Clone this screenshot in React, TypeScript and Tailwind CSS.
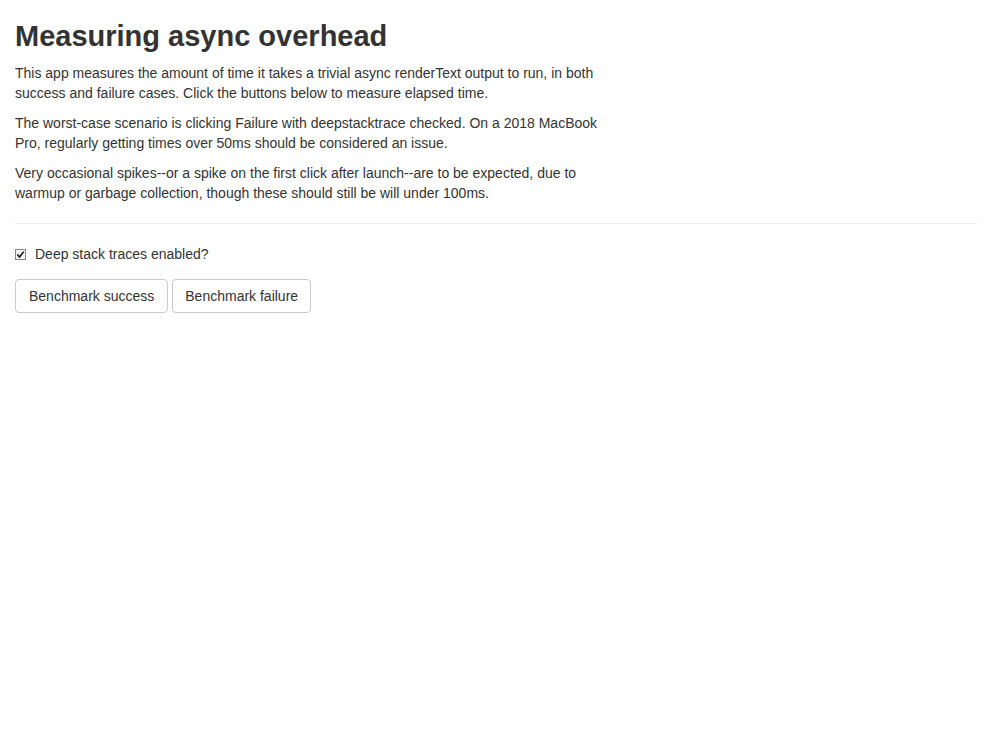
export default function App() {
  return (
    <div className="min-h-screen bg-white px-[15px] text-[14px] leading-[20px] text-[#333]" style={{ fontFamily: '"Liberation Sans", Arial, sans-serif' }}>
      <h2 className="mt-[20px] mb-[10px] text-[29px] font-bold leading-[33px]">Measuring async overhead</h2>
      <div className="max-w-[600px]">
        <p className="mb-[10px]">This app measures the amount of time it takes a trivial async renderText output to run, in both success and failure cases. Click the buttons below to measure elapsed time.</p>
        <p className="mb-[10px]">The worst-case scenario is clicking Failure with deepstacktrace checked. On a 2018 MacBook Pro, regularly getting times over 50ms should be considered an issue.</p>
        <p className="mb-[10px]">Very occasional spikes--or a spike on the first click after launch--are to be expected, due to warmup or garbage collection, though these should still be will under 100ms.</p>
      </div>
      <hr className="my-[20px] border-t border-[#eee]" />
      <div className="mb-[15px]">
        <label className="mt-[10px] mb-[10px] flex items-center gap-[9px]">
          <span className="flex h-[11px] w-[11px] items-center justify-center border border-[#8a8a8a] bg-[#f4f4f4]">
            <svg viewBox="0 0 10 10" className="h-[9px] w-[9px]">
              <path d="M1.5 5 L4 7.8 L8.5 1.8" fill="none" stroke="#111" strokeWidth="1.8" />
            </svg>
          </span>
          <span>Deep stack traces enabled?</span>
        </label>
      </div>
      <div className="flex gap-[4px]">
        <button className="rounded-[4px] border border-[#ccc] bg-white px-[13px] py-[6px] text-[14px] leading-[20px] text-[#333]">Benchmark success</button>
        <button className="rounded-[4px] border border-[#ccc] bg-white px-[12px] py-[6px] text-[14px] leading-[20px] text-[#333]">Benchmark failure</button>
      </div>
    </div>
  );
}
